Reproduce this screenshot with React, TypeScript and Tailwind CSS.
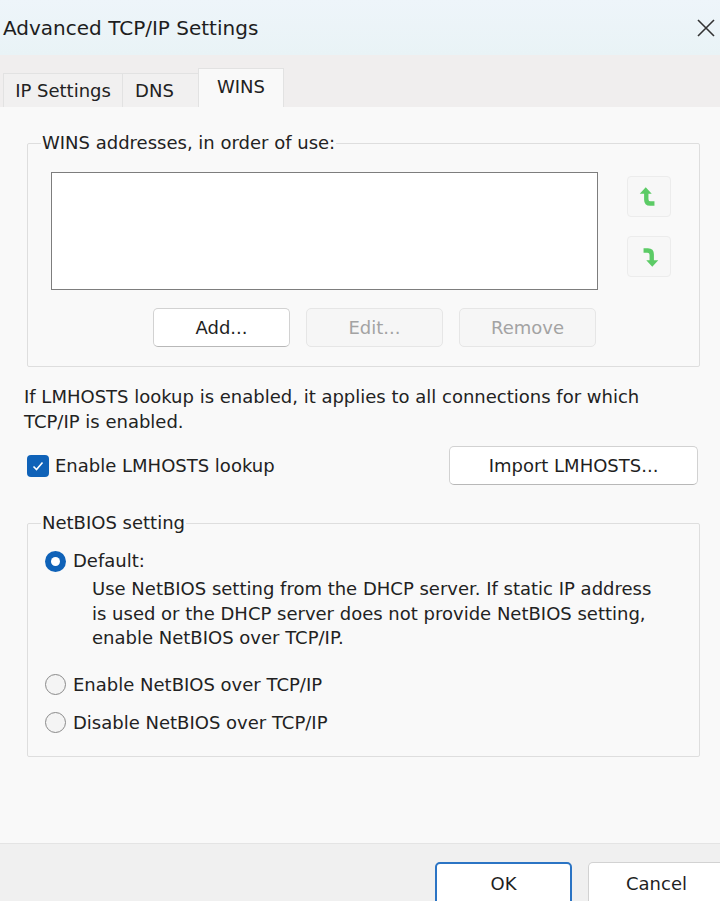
import React from "react";

const FONT = { fontFamily: '"DejaVu Sans", Verdana, sans-serif' };

function ArrowUp() {
  return (
    <svg width="20" height="24" viewBox="0 0 18 22" aria-hidden>
      <path d="M6 2 L11.5 8 H8.5 V13 Q8.5 15 10.5 15 H14 V19 H10 Q4.5 19 4.5 13.5 V8 H0.5 Z" fill="#5ccb66" />
    </svg>
  );
}

function ArrowDown() {
  return (
    <svg width="20" height="24" viewBox="0 0 18 22" aria-hidden>
      <path d="M12 20 L6.5 14 H9.5 V9 Q9.5 7 7.5 7 H4 V3 H8 Q13.5 3 13.5 8.5 V14 H17.5 Z" fill="#5ccb66" />
    </svg>
  );
}

function Button({
  children,
  disabled,
  primary,
  className = "",
}: {
  children: React.ReactNode;
  disabled?: boolean;
  primary?: boolean;
  className?: string;
}) {
  const tone = disabled
    ? "bg-[#f6f6f6] border-[#e6e6e6] text-[#a3a3a3]"
    : primary
    ? "bg-white border-2 border-[#2b74c4] text-[#1f1f1f]"
    : "bg-white border-[#d2d2d2] border-b-[#b8b8b8] text-[#1f1f1f]";
  return (
    <button
      type="button"
      className={`flex h-[39px] w-[137px] shrink-0 items-center justify-center rounded-[5px] border ${tone} ${className}`}
    >
      {children}
    </button>
  );
}

function Radio({ checked, label }: { checked?: boolean; label: string }) {
  return (
    <div className="flex h-[24px] items-center">
      {checked ? (
        <span className="flex h-[21px] w-[21px] items-center justify-center rounded-full bg-[#0f62b8]">
          <span className="h-[9px] w-[9px] rounded-full bg-white" />
        </span>
      ) : (
        <span className="h-[21px] w-[21px] rounded-full border-[1.5px] border-[#8a8a8a] bg-[#f4f4f4]" />
      )}
      <span className="ml-[7px]">{label}</span>
    </div>
  );
}

export default function App() {
  return (
    <div
      className="flex h-[901px] w-[720px] flex-col overflow-hidden bg-[#f9f9f9] text-[18px] leading-[24px] text-[#222]"
      style={FONT}
    >
      {/* title bar */}
      <div className="flex h-[55px] items-center justify-between bg-gradient-to-b from-[#eef5fa] to-[#e9f3f6] pl-[3px] pr-[4px]">
        <span className="text-[20px] text-[#1e1e1e]">Advanced TCP/IP Settings</span>
        <svg width="20" height="20" viewBox="0 0 20 20" aria-hidden>
          <path d="M2 2 L18 18 M18 2 L2 18" stroke="#333" strokeWidth="1.6" />
        </svg>
      </div>

      {/* tabs */}
      <div className="flex h-[52px] items-end bg-[#f0eeee] pl-[3px]">
        <div className="flex h-[34px] w-[119px] items-center justify-center border-t border-l border-[#e2e2e2] bg-[#f1f0f0]">
          IP Settings
        </div>
        <div className="flex h-[34px] w-[76px] items-center justify-center border-t border-l border-[#e2e2e2] bg-[#f1f0f0] pr-[12px]">
          DNS
        </div>
        <div className="flex h-[39px] w-[86px] items-start justify-center border-t border-x border-[#e2e2e2] bg-[#f9f9f9] pt-[6px]">
          WINS
        </div>
      </div>

      {/* page */}
      <div className="flex-1 pl-[24px] pr-[20px] pt-[24px]">
        <fieldset className="ml-[3px] rounded-[2px] border border-[#dedede] pb-[19px]">
          <legend className="ml-[13px] px-[1px]">WINS addresses, in order of use:</legend>
          <div className="pl-[23px]">
            <div className="mt-[17px] flex">
              <div className="h-[118px] w-[547px] border border-[#7d7d7d] bg-white" />
              <div className="ml-[29px] flex flex-col gap-[19px] pt-[4px]">
                <div className="flex h-[41px] w-[44px] items-center justify-center rounded-[4px] border border-[#ececec] bg-[#f7f7f7]">
                  <ArrowUp />
                </div>
                <div className="flex h-[41px] w-[44px] items-center justify-center rounded-[4px] border border-[#ececec] bg-[#f7f7f7]">
                  <ArrowDown />
                </div>
              </div>
            </div>
            <div className="mt-[18px] flex gap-[16px] pl-[102px]">
              <Button>Add...</Button>
              <Button disabled>Edit...</Button>
              <Button disabled>Remove</Button>
            </div>
          </div>
        </fieldset>

        <p className="mt-[17px] leading-[25px]">
          If LMHOSTS lookup is enabled, it applies to all connections for which
          <br />
          TCP/IP is enabled.
        </p>

        <div className="mt-[12px] flex items-center justify-between">
          <div className="ml-[3px] flex items-center">
            <span className="flex h-[22px] w-[22px] items-center justify-center rounded-[4px] bg-[#0f62b8]">
              <svg width="14" height="14" viewBox="0 0 14 14" aria-hidden>
                <path d="M2.5 7.5 L5.5 10.5 L11.5 3.5" fill="none" stroke="#fff" strokeWidth="1.6" />
              </svg>
            </span>
            <span className="ml-[6px]">Enable LMHOSTS lookup</span>
          </div>
          <Button className="mr-[2px] w-[249px]">Import LMHOSTS...</Button>
        </div>

        <fieldset className="ml-[3px] mt-[26px] rounded-[2px] border border-[#dedede] pb-[21px]">
          <legend className="ml-[13px] px-[1px]">NetBIOS setting</legend>
          <div className="pl-[17px]">
            <div className="mt-[14px]">
              <Radio checked label="Default:" />
            </div>
            <p className="ml-[47px] mt-[4px] leading-[24.5px]">
              Use NetBIOS setting from the DHCP server. If static IP address
              <br />
              is used or the DHCP server does not provide NetBIOS setting,
              <br />
              enable NetBIOS over TCP/IP.
            </p>
            <div className="mt-[22px] flex flex-col gap-[14px]">
              <Radio label="Enable NetBIOS over TCP/IP" />
              <Radio label="Disable NetBIOS over TCP/IP" />
            </div>
          </div>
        </fieldset>
      </div>

      {/* footer */}
      <div className="flex h-[58px] shrink-0 gap-[16px] border-t border-[#e4e4e4] bg-[#f0f0f0] pl-[435px] pt-[18px]">
        <Button primary className="h-[44px]">OK</Button>
        <Button className="h-[44px]">Cancel</Button>
      </div>
    </div>
  );
}
